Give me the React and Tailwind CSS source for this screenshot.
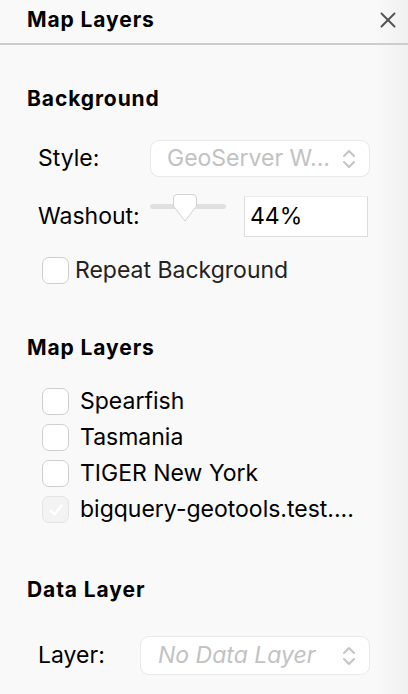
import { X } from "lucide-react";

function Chevrons({ className = "" }) {
  return (
    <svg width="14" height="22" viewBox="0 0 14 22" fill="none" className={className}>
      <path d="M2 8 L7 3 L12 8" stroke="currentColor" strokeWidth="2" strokeLinecap="round" strokeLinejoin="round" />
      <path d="M2 14 L7 19 L12 14" stroke="currentColor" strokeWidth="2" strokeLinecap="round" strokeLinejoin="round" />
    </svg>
  );
}

function Box({ checked = false }) {
  return (
    <span
      className={
        "flex items-center justify-center w-[27px] h-[27px] rounded-[7px] border shrink-0 " +
        (checked ? "border-[#e4e4e4] bg-[#f3f3f3]" : "border-[#cfcfcf] bg-white")
      }
    >
      {checked && (
        <svg width="18" height="18" viewBox="0 0 18 18" fill="none">
          <path d="M3.5 9.5 L7.5 13.5 L14.5 4.5" stroke="#ffffff" strokeWidth="2.4" strokeLinecap="round" strokeLinejoin="round" />
        </svg>
      )}
    </span>
  );
}

const layers = [
  { name: "Spearfish" },
  { name: "Tasmania" },
  { name: "TIGER New York" },
  { name: "bigquery-geotools.test....", checked: true },
];

export default function App() {
  return (
    <div
      className="w-[408px] h-[694px] overflow-hidden bg-gradient-to-r from-[#f9f9f9] from-92% to-[#f0f0f0] text-black"
      style={{ fontFamily: "Inter, 'Liberation Sans', sans-serif" }}
    >
      <header className="h-[45px] border-b-2 border-[#cdcdcd] pl-[27px] pr-[7px] pb-[4px] flex items-center justify-between">
        <h1 className="text-[21px] font-bold tracking-[0.9px]">Map Layers</h1>
        <X size={26} strokeWidth={1.8} className="text-[#555]" />
      </header>

      <section className="pl-[27px] pr-[38px]">
        <h2 className="text-[21px] font-bold tracking-[0.9px] mt-[40px] leading-[28px]">Background</h2>

        <div className="flex items-center mt-[27px] pl-[11px]">
          <span className="text-[23px] leading-[27px] w-[112px]">Style:</span>
          <div className="flex-1 h-[37px] rounded-[9px] border border-[#e8e8e8] bg-white flex items-center justify-between pl-[16px] pr-[13px]">
            <span className="text-[23px] leading-[27px] text-[#c2c2c2]">GeoServer W...</span>
            <Chevrons className="text-[#c4c4c4]" />
          </div>
        </div>

        <div className="flex items-center mt-[19px] pl-[11px]">
          <span className="text-[23px] leading-[27px] w-[112px]">Washout:</span>
          <div className="relative w-[76px] h-[41px] shrink-0">
            <div className="absolute left-0 right-0 top-[8px] h-[5px] rounded-full bg-[#e0e0e0]" />
            <svg width="26" height="30" viewBox="0 0 26 30" className="absolute left-[22px] top-[-3px]">
              <path d="M5 1.5 H21 a3.5 3.5 0 0 1 3.5 3.5 V13 L13 28 L1.5 13 V5 a3.5 3.5 0 0 1 3.5 -3.5 Z" fill="#fff" stroke="#d2d2d2" strokeWidth="1" />
            </svg>
          </div>
          <div className="ml-[18px] w-[124px] h-[41px] bg-white border border-[#dcdcdc] border-t-[#ececec] flex items-center pl-[5px]">
            <span className="text-[23px] leading-[27px]">44%</span>
          </div>
        </div>

        <label className="flex items-center mt-[20px] pl-[15px] gap-[6px]">
          <Box />
          <span className="text-[23px] leading-[27px] text-[#222]">Repeat Background</span>
        </label>
      </section>

      <section className="pl-[27px] pr-[38px]">
        <h2 className="text-[21px] font-bold tracking-[0.9px] mt-[50px] leading-[28px]">Map Layers</h2>
        <ul className="mt-[26px] pl-[15px] flex flex-col gap-[9px]">
          {layers.map((l) => (
            <li key={l.name} className="flex items-center gap-[11px]">
              <Box checked={l.checked} />
              <span className="text-[23px] leading-[27px] whitespace-nowrap">{l.name}</span>
            </li>
          ))}
        </ul>
      </section>

      <section className="pl-[27px] pr-[38px]">
        <h2 className="text-[21px] font-bold tracking-[0.9px] mt-[53px] leading-[28px]">Data Layer</h2>
        <div className="flex items-center mt-[32px] pl-[11px]">
          <span className="text-[23px] leading-[27px] w-[102px]">Layer:</span>
          <div className="flex-1 h-[39px] rounded-[9px] border border-[#e8e8e8] bg-white flex items-center justify-between pl-[17px] pr-[13px]">
            <span className="text-[23px] leading-[27px] italic text-[#c2c2c2]">No Data Layer</span>
            <Chevrons className="text-[#c4c4c4]" />
          </div>
        </div>
      </section>
    </div>
  );
}
